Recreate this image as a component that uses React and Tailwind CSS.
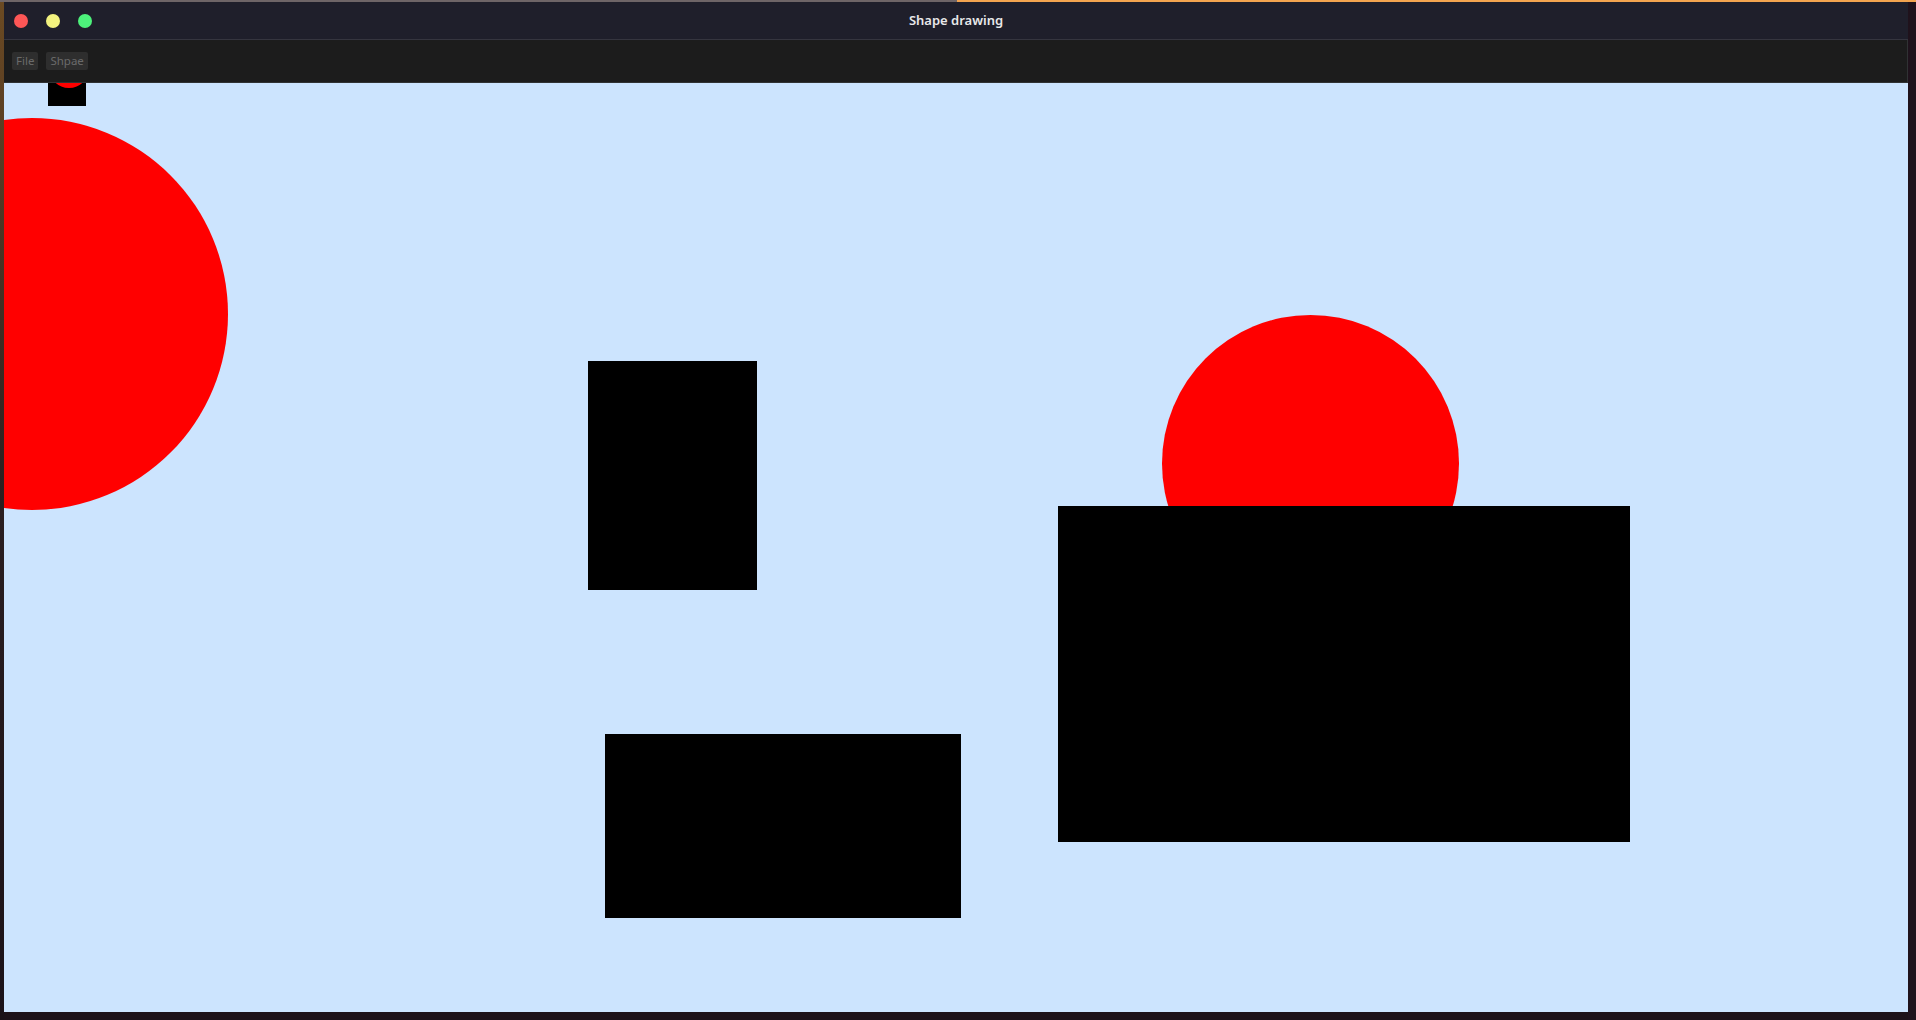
export default function App() {
  return (
    <div className="w-[1916px] h-[1020px] overflow-hidden bg-[#1d1219] flex flex-col" style={{ fontFamily: '"Noto Sans", "Open Sans", sans-serif' }}>
      <div className="h-[2px] flex shrink-0">
        <div className="w-[957px] bg-[#6e6567]" />
        <div className="flex-1 bg-[#f3a44f]" />
      </div>
      <div className="flex flex-1">
        <div className="w-[4px] bg-gradient-to-b from-[#6b4a22] via-[#2a1e20] to-[#1b1218]" />
        <div className="w-[1904px] h-[1010px] flex flex-col">
          <div className="h-[38px] shrink-0 bg-[#1f1f2b] border-b border-[#35353f] flex items-center relative">
            <div className="flex items-center gap-[18px] pl-[10px]">
              <div className="w-[14px] h-[14px] rounded-full bg-[#fd5656]" />
              <div className="w-[14px] h-[14px] rounded-full bg-[#f2f27f]" />
              <div className="w-[14px] h-[14px] rounded-full bg-[#4df27b]" />
            </div>
            <div className="absolute left-0 right-0 top-0 bottom-0 flex items-center justify-center pointer-events-none">
              <span className="text-[13px] font-semibold text-[#e8e8ea]">Shape drawing</span>
            </div>
          </div>
          <div className="h-[43px] shrink-0 bg-[#1c1c1c] border-b border-r border-[#303234] flex items-center gap-[8px] pl-[8px]">
            <div className="h-[18px] px-[4px] rounded-[2px] bg-[#2e2e2e] text-[11.5px] text-[#6a6a6a] flex items-center">File</div>
            <div className="h-[18px] px-[4px] rounded-[2px] bg-[#2e2e2e] text-[11.5px] text-[#6a6a6a] flex items-center">Shpae</div>
          </div>
          <div className="flex-1 relative overflow-hidden bg-[#cce4fe]">
            <div className="absolute left-[44px] top-[-10px] w-[38px] h-[33px] bg-black" />
            <div className="absolute left-[45px] top-[-35px] w-[40px] h-[40px] rounded-full bg-[#ff0000]" />
            <div className="absolute left-[-168px] top-[35px] w-[392px] h-[392px] rounded-full bg-[#ff0000]" />
            <div className="absolute left-[584px] top-[278px] w-[169px] h-[229px] bg-black" />
            <div className="absolute left-[601px] top-[651px] w-[356px] h-[184px] bg-black" />
            <div className="absolute left-[1158px] top-[232px] w-[297px] h-[297px] rounded-full bg-[#ff0000]" />
            <div className="absolute left-[1054px] top-[423px] w-[572px] h-[336px] bg-black" />
          </div>
        </div>
        <div className="flex-1 bg-[#1f121c]" />
      </div>
    </div>
  );
}
